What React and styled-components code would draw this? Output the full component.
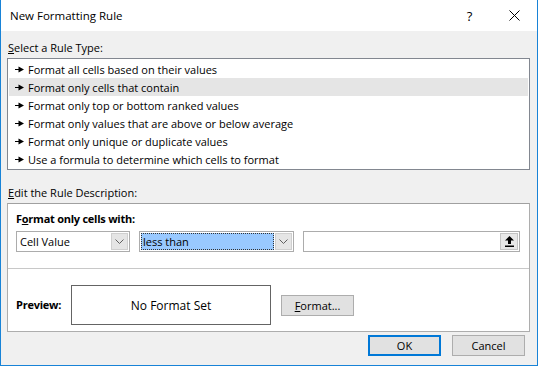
import React from "react"
import styled, { createGlobalStyle } from "styled-components"

const GlobalStyle = createGlobalStyle`
  html, body {
    margin: 0;
    padding: 0;
    background: #f0f0f0;
  }
  body {
    font-family: "Open Sans", "Noto Sans", sans-serif;
    font-size: 11px;
    color: #000;
  }
`

const ruleTypes = [
  "Format all cells based on their values",
  "Format only cells that contain",
  "Format only top or bottom ranked values",
  "Format only values that are above or below average",
  "Format only unique or duplicate values",
  "Use a formula to determine which cells to format",
]

function Pointer() {
  return (
    <svg width="9" height="7" viewBox="0 0 9 7" style={{ display: "block" }}>
      <rect x="0" y="3" width="4" height="1" fill="#000" />
      <path d="M3.5 0.5 L9 3.5 L3.5 6.5 Z" fill="#000" />
    </svg>
  )
}

function Chevron() {
  return (
    <svg width="9" height="6" viewBox="0 0 9 6">
      <path d="M0.5 0.5 L4.5 4.5 L8.5 0.5" fill="none" stroke="#606060" strokeWidth="1" />
    </svg>
  )
}

function CollapseIcon() {
  return (
    <svg width="9" height="11" viewBox="0 0 9 11">
      <path d="M4.5 0 L9 4.5 L6 4.5 L6 8 L3 8 L3 4.5 L0 4.5 Z" fill="#000" />
      <rect x="0" y="9.5" width="9" height="1.5" fill="#000" />
    </svg>
  )
}

function App() {
  return (
    <>
      <GlobalStyle />
      <Window>
        <TitleBar>
          <Title>New Formatting Rule</Title>
          <TitleButtons>
            <TitleButton>?</TitleButton>
            <TitleButton>
              <svg width="11" height="11" viewBox="0 0 11 11">
                <path d="M0.5 0.5 L10.5 10.5 M10.5 0.5 L0.5 10.5" stroke="#000" strokeWidth="1" />
              </svg>
            </TitleButton>
          </TitleButtons>
        </TitleBar>
        <Body>
          <SectionLabel>
            <u>S</u>elect a Rule Type:
          </SectionLabel>
          <RuleList>
            {ruleTypes.map((t, i) => (
              <RuleRow key={t} selected={i === 1}>
                <Pointer />
                <span>{t}</span>
              </RuleRow>
            ))}
          </RuleList>
          <SectionLabel>
            <u>E</u>dit the Rule Description:
          </SectionLabel>
          <DescPanel>
            <DescTop>
              <BoldLabel>
                F<u>o</u>rmat only cells with:
              </BoldLabel>
              <ControlsRow>
                <Combo width="114px">
                  <ComboText>Cell Value</ComboText>
                  <DropButton>
                    <Chevron />
                  </DropButton>
                </Combo>
                <Combo width="155px">
                  <ComboText selected>less than</ComboText>
                  <DropButton>
                    <Chevron />
                  </DropButton>
                </Combo>
                <RefInput>
                  <RefButton>
                    <CollapseIcon />
                  </RefButton>
                </RefInput>
              </ControlsRow>
            </DescTop>
            <PreviewRow>
              <BoldLabel width="55px">Preview:</BoldLabel>
              <PreviewBox>No Format Set</PreviewBox>
              <Button width="73px">
                <u>F</u>ormat...
              </Button>
            </PreviewRow>
          </DescPanel>
          <Footer>
            <Button width="73px" primary>
              OK
            </Button>
            <Button width="73px">Cancel</Button>
          </Footer>
        </Body>
      </Window>
    </>
  )
}

export default App

const Window = styled.div`
  width: 538px;
  height: 366px;
  box-sizing: border-box;
  border: 1px solid #1883d7;
  border-top: none;
  background: #f0f0f0;
  display: flex;
  flex-direction: column;
`

const TitleBar = styled.div`
  height: 31px;
  background: #fff;
  display: flex;
  align-items: center;
  justify-content: space-between;
  padding-left: 9px;
`

const Title = styled.div`
  font-size: 11.5px;
`

const TitleButtons = styled.div`
  display: flex;
  height: 100%;
`

const TitleButton = styled.div`
  width: 45px;
  display: flex;
  align-items: center;
  justify-content: center;
  font-size: 13px;
`

const Body = styled.div`
  flex: 1;
  padding: 8px 6px 0 6px;
  display: flex;
  flex-direction: column;
`

const SectionLabel = styled.div`
  height: 18px;
  line-height: 18px;
  padding-left: 1px;
  margin-bottom: 1px;
`

const RuleList = styled.div`
  background: #fff;
  border: 1px solid #828790;
  width: 523px;
  box-sizing: border-box;
  padding: 1px;
  margin-bottom: 14px;
`

const RuleRow = styled.div`
  height: 18px;
  display: flex;
  align-items: center;
  gap: 4px;
  padding-left: 6px;
  background: ${(p) => (p.selected ? "#e5e5e5" : "transparent")};
`

const DescPanel = styled.div`
  width: 523px;
  box-sizing: border-box;
  background: #fff;
  border: 1px solid #adadad;
  border-top-color: #a0a0a0;
`

const DescTop = styled.div`
  padding: 6px 0 16px 8px;
  border-bottom: 1px solid #c8c8c8;
`

const BoldLabel = styled.div`
  font-weight: 700;
  letter-spacing: -0.25px;
  height: 18px;
  line-height: 18px;
  width: ${(p) => p.width || "auto"};
  flex-shrink: 0;
`

const ControlsRow = styled.div`
  display: flex;
  align-items: center;
  gap: 9px;
  margin-top: 3px;
`

const Combo = styled.div`
  width: ${(p) => p.width};
  height: 21px;
  box-sizing: border-box;
  border: 1px solid #acacac;
  background: #fff;
  display: flex;
  align-items: stretch;
  padding: 1px;
`

const ComboText = styled.div`
  flex: 1;
  display: flex;
  align-items: center;
  padding-left: 2px;
  margin-right: 1px;
  background: ${(p) => (p.selected ? "#99c9ff" : "transparent")};
  outline: ${(p) => (p.selected ? "1px dotted #333" : "none")};
  outline-offset: -1px;
`

const DropButton = styled.div`
  width: 17px;
  background: #e5e5e5;
  border: 1px solid #cfcfcf;
  box-sizing: border-box;
  display: flex;
  align-items: center;
  justify-content: center;
`

const RefInput = styled.div`
  width: 217px;
  height: 21px;
  box-sizing: border-box;
  border: 1px solid #acacac;
  background: #fff;
  display: flex;
  justify-content: flex-end;
  padding: 1px;
`

const RefButton = styled.div`
  width: 18px;
  background: #e8e8e8;
  border: 1px solid #c4c4c4;
  box-sizing: border-box;
  display: flex;
  align-items: center;
  justify-content: center;
`

const PreviewRow = styled.div`
  display: flex;
  align-items: center;
  padding: 16px 0 6px 8px;
`

const PreviewBox = styled.div`
  width: 200px;
  height: 40px;
  box-sizing: border-box;
  border: 1px solid #646464;
  margin-right: 10px;
  display: flex;
  align-items: center;
  justify-content: center;
  font-size: 12px;
`

const Button = styled.div`
  width: ${(p) => p.width};
  height: 21px;
  box-sizing: border-box;
  border: 1px solid ${(p) => (p.primary ? "#0078d7" : "#adadad")};
  box-shadow: ${(p) => (p.primary ? "inset 0 0 0 1px #0078d7" : "none")};
  background: #e1e1e1;
  display: flex;
  align-items: center;
  justify-content: center;
`

const Footer = styled.div`
  display: flex;
  justify-content: flex-end;
  gap: 11px;
  margin-top: 3px;
  padding-right: 6px;
`
